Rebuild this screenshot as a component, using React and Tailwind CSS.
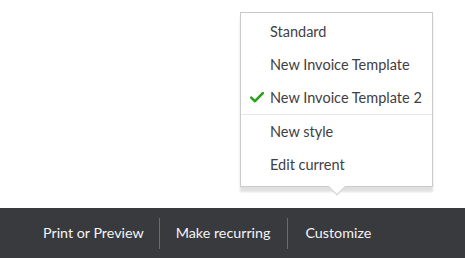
export default function App() {
  const font = { fontFamily: 'Lato, "Liberation Sans", sans-serif' };
  return (
    <div className="relative h-[258px] w-[465px] bg-white flex flex-col overflow-hidden" style={font}>
      <div className="flex-1" />
      <div className="h-[50px] bg-[#393a3e] flex items-center pl-[27px] text-[14.3px] text-[#f4f5f8]">
        <span className="pl-4 pr-[15px]">Print or Preview</span>
        <span className="w-px h-[31px] bg-[#6b6c72]" />
        <span className="pl-4 pr-[17px]">Make recurring</span>
        <span className="w-px h-[31px] bg-[#6b6c72]" />
        <span className="pl-[17px] pr-4">Customize</span>
      </div>

      <div className="absolute left-[240px] top-[12px] w-[193px] bg-white border border-[#c9cacc] pt-[2px] pb-[5px] shadow-[0_5px_2px_rgba(0,0,0,0.12)] text-[14.5px] text-[#3f4044]">
        <div className="h-[33px] flex items-center pl-[29px]">Standard</div>
        <div className="h-[33px] flex items-center pl-[29px]">New Invoice Template</div>
        <div className="h-[33px] flex items-center pl-[9px]">
          <svg width="14" height="11" viewBox="0 0 14 11" className="mr-[6px]">
            <path d="M1.2 5.6 L5 9.2 L12.8 1.2" fill="none" stroke="#2ca01c" strokeWidth="2.6" strokeLinecap="round" strokeLinejoin="round" />
          </svg>
          <span>New Invoice Template 2</span>
        </div>
        <div className="h-px bg-[#e6e7e9]" />
        <div className="h-[33px] flex items-center pl-[29px]">New style</div>
        <div className="h-[33px] flex items-center pl-[29px]">Edit current</div>
        <div className="absolute left-1/2 -translate-x-1/2 bottom-[-7px] w-[12px] h-[12px] rotate-45 bg-white border-r border-b border-[#d0d1d3]" />
      </div>
    </div>
  );
}
